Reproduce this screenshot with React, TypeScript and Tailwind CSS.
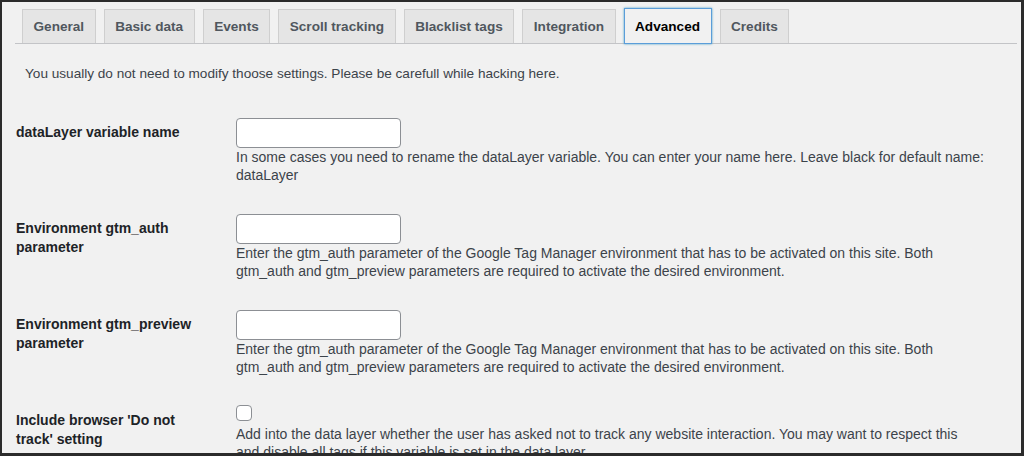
const tabs = ["General", "Basic data", "Events", "Scroll tracking", "Blacklist tags", "Integration", "Advanced", "Credits"];

const rows = [
  {
    label: "dataLayer variable name",
    kind: "text",
    desc: [
      "In some cases you need to rename the dataLayer variable. You can enter your name here. Leave black for default name:",
      "dataLayer",
    ],
  },
  {
    label: "Environment gtm_auth parameter",
    kind: "text",
    desc: [
      "Enter the gtm_auth parameter of the Google Tag Manager environment that has to be activated on this site. Both",
      "gtm_auth and gtm_preview parameters are required to activate the desired environment.",
    ],
  },
  {
    label: "Environment gtm_preview parameter",
    kind: "text",
    desc: [
      "Enter the gtm_auth parameter of the Google Tag Manager environment that has to be activated on this site. Both",
      "gtm_auth and gtm_preview parameters are required to activate the desired environment.",
    ],
  },
  {
    label: "Include browser 'Do not track' setting",
    kind: "checkbox",
    desc: [
      "Add into the data layer whether the user has asked not to track any website interaction. You may want to respect this",
      "and disable all tags if this variable is set in the data layer.",
    ],
  },
];

export default function App() {
  return (
    <div className="w-[1024px] h-[456px] overflow-hidden border-t-2 border-l-2 border-r-[3px] border-b-[3px] border-[#2b2b2b] bg-[#f1f1f1] font-['Liberation_Sans',Arial,sans-serif]">
      {/* tabs */}
      <div className="ml-[13px] mr-[4px] pt-[7px] border-b border-[#c3c4c7] flex gap-[8px] pl-[7px]">
        {tabs.map((t) => {
          const active = t === "Advanced";
          return (
            <div
              key={t}
              className={
                active
                  ? "relative z-10 h-[36px] -mt-px -mb-px pt-[3px] px-[10.5px] flex items-center text-[13.6px] font-bold text-[#000] bg-[#f1f1f1] border border-[#5b9dd9] shadow-[0_0_2px_rgba(30,140,190,0.8)]"
                  : "h-[34px] pt-[2px] px-[10.5px] flex items-center text-[13.6px] font-bold text-[#50575e] bg-[#e5e5e5] border border-b-0 border-[#cfcfcf]"
              }
            >
              {t}
            </div>
          );
        })}
      </div>

      <p className="mt-[21px] ml-[23px] text-[13.6px] leading-[18px] text-[#3c434a]">
        You usually do not need to modify thoose settings. Please be carefull while hacking here.
      </p>

      {/* settings table */}
      <div className="mt-[20px] pl-[14px]">
        {rows.map((r) => (
          <div key={r.label} className="flex">
            <div className="w-[220px] shrink-0 pt-[20px] pr-[32px] text-[14px] leading-[19px] font-bold text-[#1d2327]">
              {r.label}
            </div>
            <div className="pt-[15px] pb-[15px]">
              {r.kind === "text" ? (
                <input
                  type="text"
                  className="block w-[165px] h-[30px] bg-white border border-[#8c8f94] rounded-[4px] px-2 text-[14px]"
                />
              ) : (
                <input
                  type="checkbox"
                  className="block appearance-none w-[16px] h-[16px] -mt-px bg-white border border-[#8c8f94] rounded-[4px]"
                />
              )}
              <div className={(r.kind === "checkbox" ? "mt-[4px] " : "") + "text-[14px] leading-[18px] text-[#3c434a] whitespace-nowrap"}>
                {r.desc.map((line) => (
                  <div key={line}>{line}</div>
                ))}
              </div>
            </div>
          </div>
        ))}
      </div>
    </div>
  );
}
